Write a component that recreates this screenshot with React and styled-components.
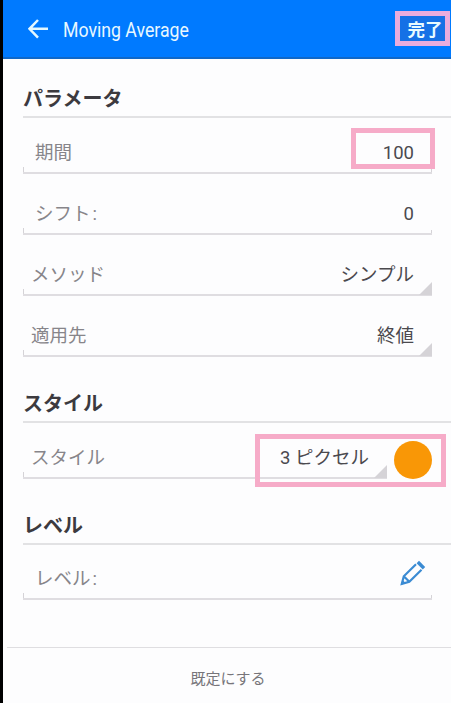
import React from "react";
import styled, { createGlobalStyle } from "styled-components";

export default function App() {
  return (
    <>
      <GlobalStyle />
      <Screen>
        <Header>
          <BackIcon viewBox="0 0 20 20">
            <path d="M10 1 L1.5 9.8 L10 18.6 M2 9.8 H20" />
          </BackIcon>
          <Title>Moving Average</Title>
          <DoneButton>完了</DoneButton>
        </Header>
        <Form>
          <Heading height="59px">パラメータ</Heading>
          <Field height="56px">
            <Label indent="12px">期間</Label>
            <Value>100</Value>
            <Marker top="10px" right="-3px" width="84px" height="41px" />
          </Field>
          <Field>
            <Label indent="12px">
              シフト<Colon>:</Colon>
            </Label>
            <Value>0</Value>
          </Field>
          <Field dropdown>
            <Label>メソッド</Label>
            <Value>シンプル</Value>
          </Field>
          <Field dropdown>
            <Label>適用先</Label>
            <Value>終値</Value>
          </Field>

          <Heading>スタイル</Heading>
          <StyleRow>
            <Field dropdown height="56px">
              <Label>スタイル</Label>
              <Value>3 ピクセル</Value>
            </Field>
            <ColorDot />
            <Marker top="11px" right="-14px" width="191px" height="53px" />
          </StyleRow>

          <Heading>レベル</Heading>
          <Field height="55px">
            <Label indent="12px">
              レベル<Colon>:</Colon>
            </Label>
            <PencilIcon viewBox="0 0 26 26">
              <path d="M16 4.2 L3.8 16.2 L1.8 23.8 L9.3 21.7 L21.5 9.7 M3.8 16.2 L9.3 21.7" />
              <path className="cap" d="M17.8 2 L24 8.2" />
              <path className="tip" d="M1 24.8 L2.4 19.8 L5.8 23.2 Z" />
            </PencilIcon>
          </Field>
        </Form>
        <Footer>既定にする</Footer>
      </Screen>
    </>
  );
}

const GlobalStyle = createGlobalStyle`
  * {
    box-sizing: border-box;
  }
  body {
    margin: 0;
    background: #fdfdfe;
    font-family: Roboto, "Noto Sans CJK JP", sans-serif;
  }
`;
const Screen = styled.div`
  display: flex;
  flex-direction: column;
  height: 703px;
  border-left: 3px solid #000;
  overflow: hidden;
`;
const Header = styled.header`
  display: flex;
  align-items: center;
  height: 59px;
  flex-shrink: 0;
  padding: 0 1px 0 25px;
  background: #007aff;
  border-bottom: 2px solid #1068c8;
  color: #fff;
`;
const BackIcon = styled.svg`
  width: 20px;
  height: 20px;
  fill: none;
  stroke: #e4f8ff;
  stroke-width: 2.5;
`;
const Title = styled.h1`
  margin: 3px auto 0 15px;
  font-size: 20.5px;
  font-weight: 400;
  color: #e8f8ff;
  white-space: nowrap;
  transform: scaleX(0.863);
  transform-origin: left;
`;
const DoneButton = styled.button`
  width: 55px;
  height: 35px;
  padding: 0 0 0 5px;
  border: 5px solid #e9acdd;
  background: #1571e6;
  color: #e8fbff;
  font-family: "Noto Sans CJK JP", sans-serif;
  font-size: 17.5px;
  font-weight: 700;
  line-height: 23px;
  white-space: nowrap;
`;
const Form = styled.main`
  flex: 1;
  padding: 0 19px 0 20px;
`;
const Heading = styled.h2`
  display: flex;
  align-items: flex-end;
  height: ${props => props.height || "66px"};
  margin: 0 -19px 0 0;
  padding-bottom: 3px;
  border-bottom: 2px solid #e2e2e4;
  color: #3c3a3f;
  font-size: 20px;
  font-weight: 700;
  line-height: 28px;
`;
const Field = styled.div`
  position: relative;
  display: flex;
  flex: 1;
  justify-content: space-between;
  align-items: flex-end;
  height: ${props => props.height || "61px"};
  padding: 0 18px 6px 0;
  border-bottom: 2px solid #dfdde1;
  /* ticks at both ends of the underline */
  &:before,
  &:after {
    content: "";
    position: absolute;
    bottom: 0;
    left: 0;
    width: 1px;
    height: 5px;
    background: #d5d3d7;
  }
  &:after {
    bottom: ${props => (props.dropdown ? "-1px" : "0")};
    left: auto;
    right: 0;
    width: ${props => (props.dropdown ? "13px" : "1px")};
    height: ${props => (props.dropdown ? "13px" : "3px")};
    clip-path: ${props =>
      props.dropdown ? "polygon(100% 0, 100% 100%, 0 100%)" : "none"};
  }
`;
const Label = styled.span`
  padding-left: ${props => props.indent || "8px"};
  color: #87858a;
  font-size: 18.5px;
  line-height: 26px;
`;
const Colon = styled.span`
  margin-left: 2px;
`;
const Value = styled.span`
  color: #4b494e;
  font-size: 18.5px;
  line-height: 26px;
`;
const StyleRow = styled.div`
  position: relative;
  display: flex;
  align-items: flex-end;
  gap: 7px;
`;
const ColorDot = styled.div`
  width: 38px;
  height: 38px;
  border-radius: 50%;
  background: #f99706;
`;
/* pink frame drawn over a value */
const Marker = styled.div`
  position: absolute;
  z-index: 1;
  top: ${props => props.top};
  right: ${props => props.right};
  width: ${props => props.width};
  height: ${props => props.height};
  border: 5px solid #f6abc8;
`;
const PencilIcon = styled.svg`
  width: 26px;
  height: 26px;
  margin: 0 -12px 6px 0;
  fill: none;
  stroke: #3b8bd3;
  stroke-width: 2.2;
  .cap {
    stroke-width: 3.4;
  }
  .tip {
    fill: #3b8bd3;
    stroke: none;
  }
`;
const Footer = styled.footer`
  display: flex;
  justify-content: center;
  align-items: center;
  height: 56px;
  padding: 3px 2px 0 0;
  margin-left: 4px;
  border-top: 1px solid #dfdee1;
  color: #77757a;
  font-size: 15px;
`;
